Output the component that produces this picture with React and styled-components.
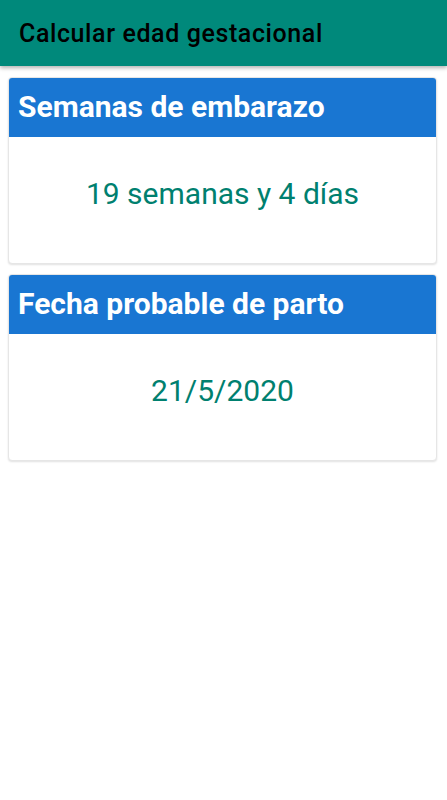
import React from "react";
import styled, { createGlobalStyle } from "styled-components";

const Global = createGlobalStyle`
  html, body { margin: 0; padding: 0; background: #fff; }
  body { font-family: Roboto, "Noto Sans", "Liberation Sans", sans-serif; }
`;

const Page = styled.div`
  display: flex;
  flex-direction: column;
  min-height: 800px;
  background: #fff;
`;

const AppBar = styled.header`
  height: 66px;
  background: #00897b;
  display: flex;
  align-items: center;
  padding: 0 19px;
  box-shadow: 0 2px 4px rgba(0, 0, 0, 0.3);
  position: relative;
  z-index: 1;
`;

const Title = styled.h1`
  margin: 0;
  font-size: 25px;
  font-weight: 500;
  color: #000;
  line-height: 1;
  letter-spacing: 0.6px;
`;

const Content = styled.main`
  display: flex;
  flex-direction: column;
  gap: 10px;
  padding: 11px 10px 0 8px;
`;

const Card = styled.section`
  border: 1px solid #e6e6e6;
  border-radius: 4px;
  overflow: hidden;
  box-shadow: 0 1px 2px rgba(0, 0, 0, 0.12);
  background: #fff;
`;

const CardHeader = styled.div`
  height: 60px;
  background: #1976d2;
  display: flex;
  align-items: center;
  padding: 0 10px;
  margin: -1px -1px 0 -1px;
`;

const CardTitle = styled.h2`
  margin: 0;
  font-size: 30px;
  font-weight: 700;
  color: #fff;
  line-height: 1;
`;

const CardBody = styled.div`
  padding: 39px 0 52px;
  text-align: center;
`;

const Value = styled.div`
  font-size: 30px;
  font-weight: 400;
  color: #00806f;
  line-height: 35px;
`;

const ResultCard = ({ title, value }) => (
  <Card>
    <CardHeader>
      <CardTitle>{title}</CardTitle>
    </CardHeader>
    <CardBody>
      <Value>{value}</Value>
    </CardBody>
  </Card>
);

export default function App() {
  return (
    <>
      <Global />
      <Page>
        <AppBar>
          <Title>Calcular edad gestacional</Title>
        </AppBar>
        <Content>
          <ResultCard title="Semanas de embarazo" value="19 semanas y 4 días" />
          <ResultCard title="Fecha probable de parto" value="21/5/2020" />
        </Content>
      </Page>
    </>
  );
}
